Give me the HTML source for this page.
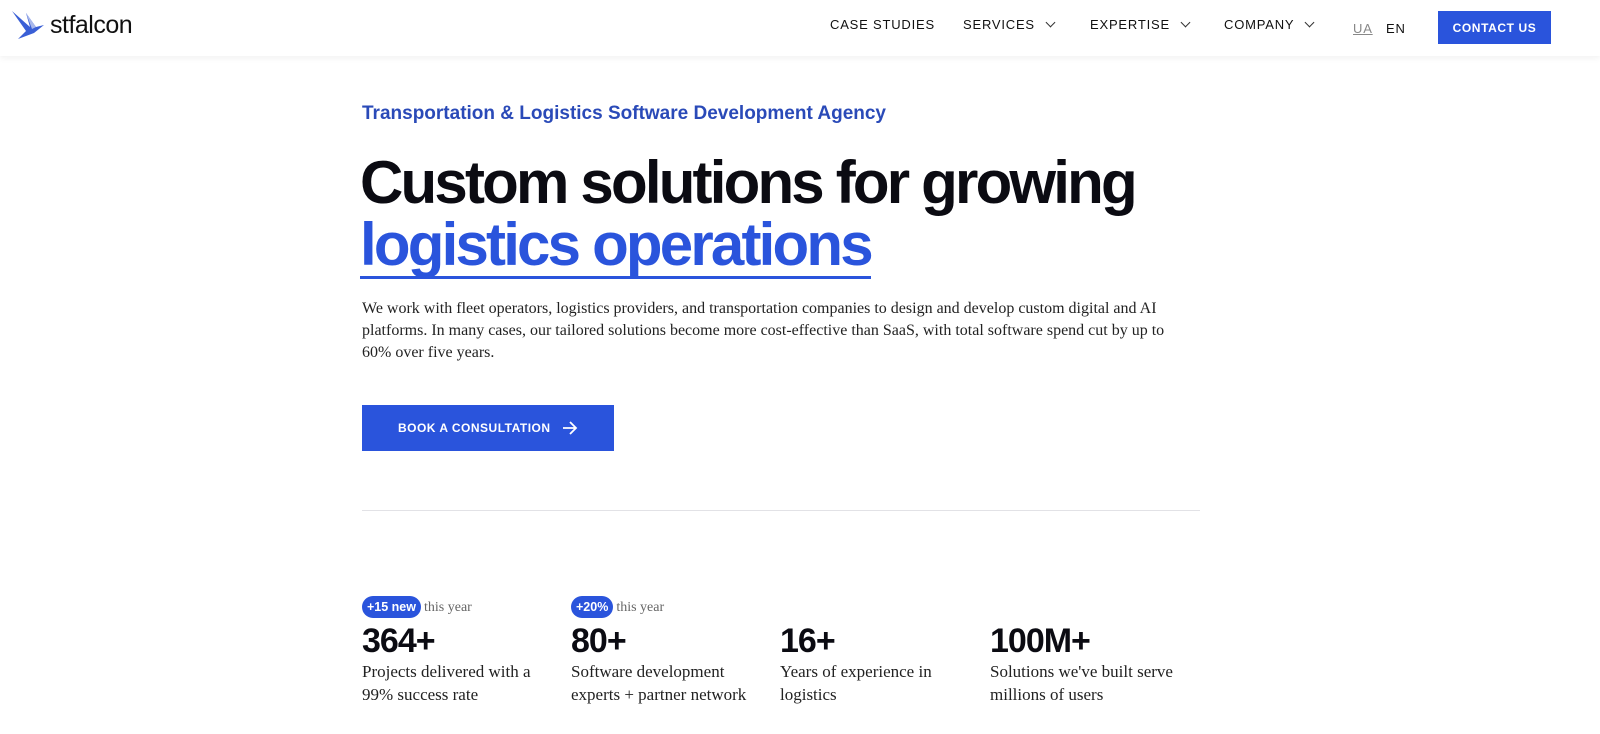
<!DOCTYPE html>
<html><head><meta charset="utf-8"><style>
*{margin:0;padding:0;box-sizing:border-box}
body{width:1600px;height:734px;overflow:hidden;background:#fff;font-family:"Liberation Sans",sans-serif;color:#0b0b12}
.hdr{position:absolute;left:0;top:0;width:1600px;height:56px;background:#fff;box-shadow:0 2px 6px rgba(0,0,0,.06)}
.logo{position:absolute;left:12px;top:9px;display:flex;align-items:center}
.logo span{font-size:25px;margin-left:6px;letter-spacing:-0.5px;color:#111}
.nav{position:absolute;top:17px;font-size:13px;letter-spacing:0.8px;color:#111}
.chev{display:inline-block;width:7px;height:7px;border-right:1.6px solid #333;border-bottom:1.6px solid #333;transform:rotate(45deg);margin-left:12px;position:relative;top:-3px}
.btn{position:absolute;left:1438px;top:11px;width:113px;height:33px;background:#2a54dc;color:#fff;font-size:12px;font-weight:bold;letter-spacing:.6px;display:flex;align-items:center;justify-content:center}
.sub{position:absolute;left:362px;top:103px;font-size:19px;font-weight:bold;color:#2a4ab8}
h1{position:absolute;left:360px;top:152px;font-size:60px;line-height:62px;font-weight:bold;letter-spacing:-2.8px;white-space:nowrap}
.blue{color:#2a54dc;display:inline-block;border-bottom:3px solid #2a54dc;line-height:58px;padding-bottom:2px}
.p{position:absolute;left:362px;top:298px;width:835px;font-family:"Liberation Serif",serif;font-size:16px;line-height:22px;color:#222}
.cta{position:absolute;left:362px;top:405px;width:252px;height:46px;background:#2a54dc;color:#fff;font-size:12px;font-weight:bold;letter-spacing:.5px;display:flex;align-items:center;justify-content:center}
.hr{position:absolute;left:362px;top:510px;width:838px;height:1px;background:#e2e2e6}
.st{position:absolute;top:596px}
.pill{display:inline-block;background:#2a54dc;color:#fff;font-size:12.5px;font-weight:bold;border-radius:12px;padding:4px 5px;}
.ty{font-family:"Liberation Serif",serif;font-size:14px;color:#666;margin-left:3px}
.num{position:absolute;top:622px;font-size:34px;font-weight:bold;letter-spacing:-1px}
.d{position:absolute;top:660px;font-family:"Liberation Serif",serif;font-size:17px;line-height:23px;color:#222}
</style></head><body>
<div class="hdr">
 <div class="logo"><svg width="32" height="32" viewBox="0 0 32 32"><path d="M0 2 L18 18 L14 4 L24 18 L32 16 L22 24 L6 30 L14 22 Z" fill="#3a5fd6"/><path d="M14 4 L24 18 L20 20 Z" fill="#a9b8ec"/></svg><span>stfalcon</span></div>
 <div class="nav" style="left:830px">CASE STUDIES</div>
 <div class="nav" style="left:963px">SERVICES<i class="chev"></i></div>
 <div class="nav" style="left:1090px">EXPERTISE<i class="chev"></i></div>
 <div class="nav" style="left:1224px">COMPANY<i class="chev"></i></div>
 <div class="nav" style="left:1353px;top:21px;color:#888;text-decoration:underline">UA</div>
 <div class="nav" style="left:1386px;top:21px">EN</div>
 <div class="btn">CONTACT US</div>
</div>
<div class="sub">Transportation &amp; Logistics Software Development Agency</div>
<h1>Custom solutions for growing<br><span class="blue">logistics operations</span></h1>
<div class="p">We work with fleet operators, logistics providers, and transportation companies to design and develop custom digital and AI platforms. In many cases, our tailored solutions become more cost-effective than SaaS, with total software spend cut by up to 60% over five years.</div>
<div class="cta">BOOK A CONSULTATION&nbsp;&nbsp;&nbsp;<svg width="16" height="14" viewBox="0 0 16 14"><path d="M1 7H14M8 1L14 7L8 13" stroke="#fff" stroke-width="1.8" fill="none"/></svg></div>
<div class="hr"></div>
<div class="st" style="left:362px"><span class="pill">+15 new</span><span class="ty">this year</span></div>
<div class="st" style="left:571px"><span class="pill">+20%</span><span class="ty">this year</span></div>
<div class="num" style="left:362px">364+</div>
<div class="num" style="left:571px">80+</div>
<div class="num" style="left:780px">16+</div>
<div class="num" style="left:990px">100M+</div>
<div class="d" style="left:362px">Projects delivered with a<br>99% success rate</div>
<div class="d" style="left:571px">Software development<br>experts + partner network</div>
<div class="d" style="left:780px">Years of experience in<br>logistics</div>
<div class="d" style="left:990px">Solutions we've built serve<br>millions of users</div>
</body></html>
